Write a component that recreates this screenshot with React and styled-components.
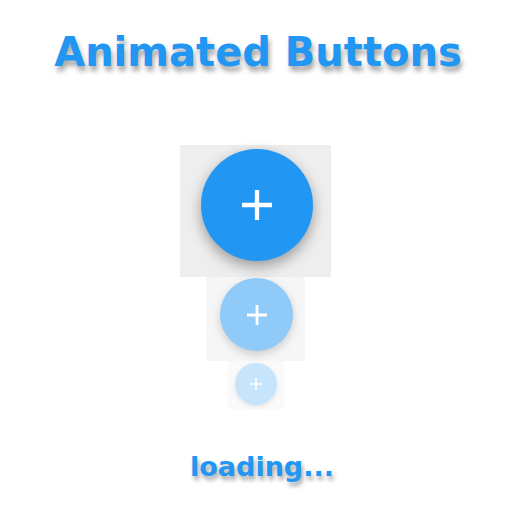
import React from "react";
import styled, { createGlobalStyle } from "styled-components";

const GlobalStyle = createGlobalStyle`
  body {
    margin: 0;
    background: #fff;
    font-family: "DejaVu Sans", sans-serif;
  }
`;

const Page = styled.div`
  width: 512px;
  height: 512px;
  display: flex;
  flex-direction: column;
  align-items: center;
`;

const Title = styled.h1`
  margin: 28px 0 0 4px;
  font-size: 40px;
  line-height: 48px;
  font-weight: bold;
  color: #2196f3;
  text-shadow: 2px 5px 5px rgba(0, 0, 0, 0.35);
`;

const Stack = styled.div`
  margin-top: 69px;
  display: flex;
  flex-direction: column;
  align-items: center;
`;

const Frame = styled.div`
  box-sizing: border-box;
  width: ${(p) => p.w}px;
  height: ${(p) => p.h}px;
  padding: ${(p) => p.pad};
  background: #eeeeee;
  opacity: ${(p) => p.fade};
  margin-left: ${(p) => p.shift || 0}px;
`;

const Fab = styled.div`
  width: ${(p) => p.size}px;
  height: ${(p) => p.size}px;
  border-radius: 50%;
  background: #2196f3;
  display: flex;
  align-items: center;
  justify-content: center;
  box-shadow: 0 ${(p) => p.size * 0.05}px ${(p) => p.size * 0.12}px
    rgba(0, 0, 0, 0.35);
`;

const Loading = styled.div`
  margin: 42px 0 0 12px;
  font-size: 27px;
  line-height: 32px;
  font-weight: bold;
  color: #2196f3;
  text-shadow: 2px 4px 4px rgba(0, 0, 0, 0.35);
`;

const Plus = ({ size, stroke }) => (
  <svg width={size} height={size} viewBox="0 0 28 28">
    <path
      d="M14 0V28M0 14H28"
      stroke="#fff"
      strokeWidth={stroke}
      fill="none"
    />
  </svg>
);

const buttons = [
  { w: 151, h: 132, pad: "4px 18px 16px 21px", size: 112, plus: 30, stroke: 4, fade: 1, shift: -1 },
  { w: 99, h: 84, pad: "1px 12px 10px 14px", size: 73, plus: 20, stroke: 4, fade: 0.5, shift: -1 },
  { w: 56, h: 48, pad: "2px 7px 4px 7px", size: 42, plus: 12, stroke: 4, fade: 0.25, shift: -1 },
];

export default function App() {
  return (
    <>
      <GlobalStyle />
      <Page>
        <Title>Animated Buttons</Title>
        <Stack>
          {buttons.map((b, i) => (
            <Frame key={i} w={b.w} h={b.h} pad={b.pad} fade={b.fade} shift={b.shift}>
              <Fab size={b.size}>
                <Plus size={b.plus} stroke={b.stroke} />
              </Fab>
            </Frame>
          ))}
        </Stack>
        <Loading>loading...</Loading>
      </Page>
    </>
  );
}
